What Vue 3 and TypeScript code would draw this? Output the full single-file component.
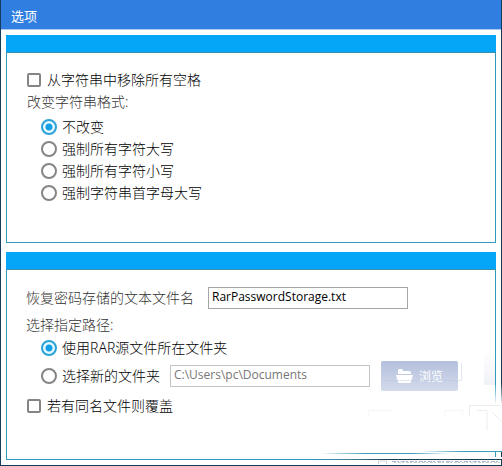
<script setup lang="ts">
import { ref } from 'vue'

const removeSpaces = ref(false)
const overwrite = ref(false)
const format = ref('none')
const location = ref('source')
const fileName = ref('RarPasswordStorage.txt')
const folder = ref('C:\\Users\\pc\\Documents')

const formats = [
  { id: 'none', label: '不改变' },
  { id: 'upper', label: '强制所有字符大写' },
  { id: 'lower', label: '强制所有字符小写' },
  { id: 'capital', label: '强制字符串首字母大写' },
]
</script>

<template>
  <main class="window">
    <header class="title-bar"><h1>选项</h1></header>
    <div class="content">
      <section class="panel">
        <div class="panel-head"></div>
        <div class="panel-body">
          <label class="option">
            <input v-model="removeSpaces" type="checkbox" />
            <span>从字符串中移除所有空格</span>
          </label>
          <fieldset>
            <legend>改变字符串格式:</legend>
            <div class="choices">
              <label v-for="f in formats" :key="f.id" class="option">
                <input v-model="format" type="radio" name="format" :value="f.id" />
                <span>{{ f.label }}</span>
              </label>
            </div>
          </fieldset>
        </div>
      </section>

      <section class="panel">
        <div class="panel-head"></div>
        <div class="panel-body storage">
          <div class="file-row">
            <label for="file-name">恢复密码存储的文本文件名</label>
            <input id="file-name" v-model="fileName" class="field" type="text" />
          </div>
          <fieldset>
            <legend>选择指定路径:</legend>
            <div class="choices paths">
              <label class="option">
                <input v-model="location" type="radio" name="location" value="source" />
                <span>使用RAR源文件所在文件夹</span>
              </label>
              <div class="folder-row">
                <label class="option">
                  <input v-model="location" type="radio" name="location" value="custom" />
                  <span>选择新的文件夹</span>
                </label>
                <input
                  v-model="folder"
                  class="field"
                  type="text"
                  aria-label="选择新的文件夹"
                  :disabled="location !== 'custom'"
                />
                <button type="button" class="browse" :disabled="location !== 'custom'">
                  <svg viewBox="0 0 17 16" aria-hidden="true">
                    <path d="M2 6V2l1-1h3l1 2h6l2 1v2z" />
                    <path d="M0 7h17l-2 7-1 1H3l-1-1z" />
                  </svg>
                  <span>浏览</span>
                </button>
              </div>
            </div>
          </fieldset>
          <label class="option">
            <input v-model="overwrite" type="checkbox" />
            <span>若有同名文件则覆盖</span>
          </label>
        </div>
      </section>
    </div>
    <svg class="haze" viewBox="0 0 212 126" aria-hidden="true">
      <defs>
        <linearGradient id="white-down" x1="0" x2="0" y1="0" y2="1">
          <stop offset="0" stop-color="#fff" stop-opacity="0" />
          <stop offset="0.6" stop-color="#fff" />
        </linearGradient>
        <linearGradient id="white-right" x1="0" x2="1">
          <stop offset="0" stop-color="#fff" stop-opacity="0" />
          <stop offset="0.5" stop-color="#fff" />
        </linearGradient>
        <linearGradient id="edge-fade" x1="0" x2="1">
          <stop offset="0" stop-color="#3c9db8" stop-opacity="0" />
          <stop offset="0.35" stop-color="#3c9db8" />
          <stop offset="0.7" stop-color="#3c9db8" />
          <stop offset="1" stop-color="#3c9db8" stop-opacity="0" />
        </linearGradient>
        <linearGradient id="edge-in" x1="0" x2="1">
          <stop offset="0" stop-color="#3c9db8" stop-opacity="0" />
          <stop offset="0.5" stop-color="#3c9db8" />
        </linearGradient>
        <linearGradient id="frame-in" x1="0" x2="1">
          <stop offset="0" stop-color="#173f58" stop-opacity="0" />
          <stop offset="0.4" stop-color="#173f58" />
        </linearGradient>
        <linearGradient id="patch-fade" x1="0" x2="0" y1="0" y2="1">
          <stop offset="0" stop-color="#eff2f7" stop-opacity="0" />
          <stop offset="1" stop-color="#eff2f7" />
        </linearGradient>
      </defs>
      <rect x="201" y="44" width="11" height="36" fill="url(#white-down)" />
      <rect x="201" y="79" width="11" height="33" fill="#fff" />
      <rect x="30" y="118" width="182" height="3" fill="url(#white-right)" />
      <rect x="194" y="10" width="11" height="36" fill="url(#patch-fade)" />
      <path d="M94 41.5h77.500V24" fill="none" stroke="#b9c3d8" stroke-opacity="0.4" />
      <path d="M78.500 78v-6.500h24M154.500 78v-6.500h18v5" fill="none" stroke="#f6f6f8" />
      <path d="M179.500 77V66.500h32M187 71.500h10v20M202 73l9 9" fill="none" stroke="#ededf1" />
      <rect x="30" y="114" width="130" height="1" fill="url(#edge-fade)" />
      <rect x="130" y="112" width="82" height="1" fill="url(#edge-in)" />
      <rect x="20" y="120" width="192" height="1" fill="url(#frame-in)" />
      <path d="M88.500 125v-3h8v3" fill="none" stroke="#d3d6da" />
      <path d="M102 122.500h108" stroke="#b4b9bf" stroke-dasharray="4 1 2 2" />
      <path d="M104 123.500h106" stroke="#c9cdd2" stroke-dasharray="2 2 3 1" />
    </svg>
  </main>
</template>

<style>
body {
  margin: 0;
  background: #fff;
}
</style>

<style scoped>
* {
  box-sizing: border-box;
}
.window {
  position: relative;
  display: flex;
  flex-direction: column;
  min-height: 100vh;
  border: 1px solid #153d59;
  border-top: 0;
  background: #fff;
  color: #000;
  font: 14px/20px "Noto Sans", "Noto Sans CJK SC", sans-serif;
}
.title-bar {
  padding: 6px 10px 3px;
  background: #2f7ee0;
  border-bottom: 1px solid #a8c9f4;
  color: #fff;
}
h1 {
  margin: 0;
  font-size: 13px;
  line-height: 20px;
  font-weight: 400;
}
.content {
  flex: 1;
  display: grid;
  grid-template-rows: 208fr 208fr;
  gap: 9px;
  padding: 5px;
}
.panel {
  border: 1px solid #2f9cbc;
}
.panel-head {
  height: 18px;
  margin: -1px -1px 0;
  background: #05a6f8;
  border-bottom: 1px solid #3b91ad;
}
.panel-body {
  padding: 17px 20px;
}
.panel-body > .option,
.choices {
  font-weight: 300;
}
.storage {
  padding-left: 19px;
}
fieldset {
  margin: 0;
  padding: 0;
  border: 0;
  min-width: 0;
}
legend {
  padding: 0;
  line-height: 24px;
}
.storage legend {
  padding-top: 4px;
}
.storage > .option {
  padding: 5px 0 0 1px;
}
legend,
.file-row label {
  color: #333;
  font-weight: 300;
}
.choices {
  display: flex;
  flex-direction: column;
  gap: 2px;
  padding: 3px 0 0 14px;
}
.choices.paths {
  gap: 3px;
  padding: 1px 0 0 15px;
}
.option {
  display: flex;
  align-items: center;
  gap: 6px;
  white-space: nowrap;
}
.choices .option {
  gap: 5px;
}
.option input {
  appearance: none;
  flex: none;
  width: 16px;
  height: 16px;
  margin: 0;
  border: 2px solid #858585;
  background: #fff;
}
.option input[type="checkbox"] {
  width: 14px;
  height: 14px;
  border-radius: 2px;
}
.option input[type="checkbox"]:checked {
  background: #1b9fdf;
}
.option input[type="radio"] {
  border-radius: 50%;
}
.option input[type="radio"]:checked {
  border-color: #2ba3d8;
  background: radial-gradient(circle, #129fe5 0 3px, #e6f8ff 4px);
}
.file-row {
  display: flex;
  align-items: center;
  gap: 14px;
  white-space: nowrap;
}
.field {
  width: 200px;
  min-width: 0;
  height: 22px;
  padding: 0 3px 4px;
  border: 1px solid #a6a6a6;
  background: #fff;
  color: #000;
  font: 12px/16px "Open Sans", sans-serif;
}
.field:disabled {
  border-color: #c4c4c4;
  color: #777;
}
.folder-row {
  display: flex;
  align-items: center;
  gap: 10px;
}
.folder-row .browse {
  margin-left: 1px;
}
.browse {
  display: flex;
  flex: none;
  align-items: center;
  justify-content: center;
  gap: 6px;
  width: 77px;
  height: 30px;
  padding: 0;
  border: 0;
  border-radius: 2px;
  background: linear-gradient(#b4c0dc, #d3daec);
  color: #fff;
  font: 12px/20px "Noto Sans CJK SC", sans-serif;
}
.browse svg {
  width: 17px;
  height: 16px;
  fill: #fff;
}
.haze {
  position: absolute;
  right: -1px;
  bottom: 0;
  width: 212px;
  height: 126px;
  pointer-events: none;
}
</style>
